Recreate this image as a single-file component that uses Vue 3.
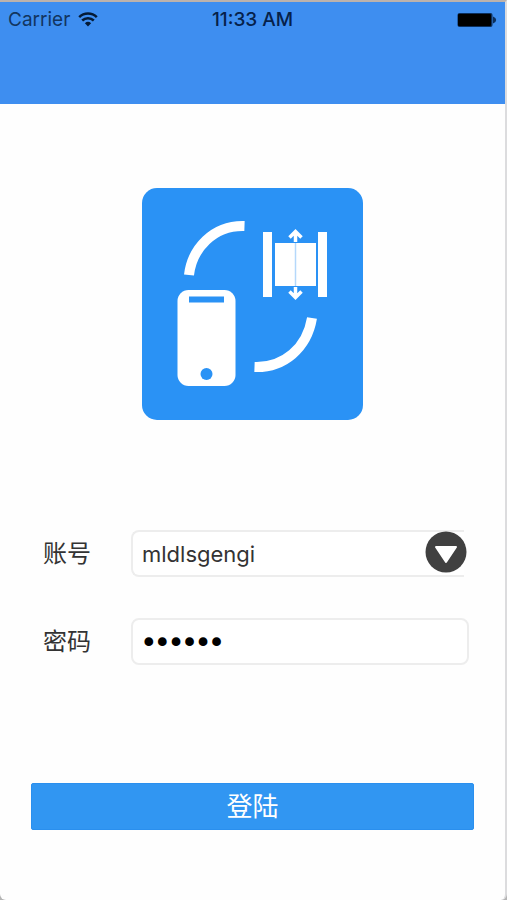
<template>
  <div class="screen">
    <header class="header">
      <div class="status-bar">
        <div class="carrier">
          <span>Carrier</span>
          <svg class="wifi" viewBox="0 0 20 15" aria-hidden="true">
            <path d="M1.200 5.200a12.600 12.600 0 0 1 17.600 0" />
            <path d="M4.200 8.500a8.300 8.300 0 0 1 11.600 0" />
            <path class="dot" d="M6.900 11.200a4.600 4.600 0 0 1 6.200 0L10 14.600z" />
          </svg>
        </div>
        <time class="clock">11:33 AM</time>
        <svg class="battery" viewBox="0 0 40 16" aria-hidden="true">
          <rect x="0.500" y="1" width="35" height="14" rx="2" />
          <rect class="level" x="1" y="2" width="33" height="12" rx="1" />
          <path d="M36 4.500q3.200 1.200 3.200 3.500t-3.200 3.500z" />
        </svg>
      </div>
    </header>

    <main class="content">
      <svg class="logo" viewBox="0 0 221 232" role="img" aria-label="Logo">
        <rect width="221" height="232" rx="15" fill="#2a92f5" />
        <g fill="none" stroke="#fff" stroke-width="10">
          <path d="M47 87C50 61 71 37 102.500 38" />
          <path d="M170 130C165 160 142 180 112.500 179" />
        </g>
        <rect x="35.500" y="102" width="58" height="96" rx="11" fill="#fff" />
        <rect x="47" y="108.500" width="35" height="6" fill="#2a92f5" />
        <circle cx="64.500" cy="186" r="6" fill="#2a92f5" />
        <g fill="#fff">
          <rect x="121" y="44" width="9" height="65" />
          <rect x="176" y="44" width="9" height="65" />
          <rect x="133" y="55" width="41" height="43" />
        </g>
        <path d="M153.500 55v43" stroke="#b5d8fb" stroke-width="1.500" />
        <g fill="none" stroke="#fff" stroke-width="3.500">
          <path d="M153.500 54V44M147.500 49.500l6-6 6 6" />
          <path d="M153.500 99v10M147.500 103.500l6 6 6-6" />
        </g>
      </svg>

      <form class="login-form" @submit.prevent="login">
        <div class="fields">
          <div class="field">
            <label for="account">账号</label>
            <div class="account-box">
              <input
                id="account"
                v-model="account"
                type="text"
                autocomplete="username"
              />
              <button type="button" class="toggle" aria-label="选择账号">
                <svg viewBox="0 0 42 42" aria-hidden="true">
                  <circle cx="21" cy="21" r="20.500" fill="#404040" />
                  <path
                    d="M11 16h20L21 31z"
                    fill="#fff"
                    stroke="#fff"
                    stroke-width="2"
                    stroke-linejoin="round"
                  />
                </svg>
              </button>
            </div>
          </div>
          <div class="field">
            <label for="password">密码</label>
            <input
              id="password"
              v-model="password"
              class="password"
              type="password"
              autocomplete="current-password"
            />
          </div>
        </div>
        <button type="submit" class="submit">登陆</button>
      </form>
    </main>
  </div>
</template>

<script setup>
import { ref } from "vue";

const emit = defineEmits(["login"]);

const account = ref("mldlsgengi");
const password = ref("123456");

const login = () => {
  emit("login", { account: account.value, password: password.value });
};
</script>

<style>
body {
  margin: 0;
  background-color: #b4b4b4;
}
</style>

<style scoped>
.screen {
  box-sizing: border-box;
  min-height: 100vh;
  border-top: 2px solid #bcb2ac;
  border-right: 2px solid #dcdcde;
  border-radius: 0 0 6px 6px;
  background-color: #fefefe;
  font-family: Inter, "Noto Sans CJK SC", sans-serif;
  color: #333;
}

.header {
  height: 102px;
  background-color: #3e8ef0;
}

.status-bar {
  display: grid;
  grid-template-columns: 1fr auto 1fr;
  align-items: center;
  height: 35px;
  padding: 0 8px;
  font-size: 19px;
  line-height: 24px;
}

.carrier {
  display: flex;
  align-items: center;
  gap: 8px;
  color: #12355f;
}

.wifi {
  width: 20px;
  height: 15px;
  fill: none;
  stroke: #041a35;
  stroke-width: 2.5;
}

.wifi .dot {
  fill: #041a35;
  stroke: none;
}

.clock {
  color: #06214a;
  font-weight: 500;
}

.battery {
  justify-self: end;
  width: 40px;
  height: 16px;
  fill: #0c2f5c;
}

.battery .level {
  fill: #000;
}

.content {
  display: flex;
  flex-direction: column;
  align-items: center;
  padding: 84px 31px 68px;
}

.logo {
  width: 221px;
  height: 232px;
}

.login-form {
  width: 100%;
  margin-top: 110px;
}

.fields {
  display: flex;
  flex-direction: column;
  gap: 41px;
  padding: 0 5px 0 12px;
}

.field {
  display: flex;
  align-items: center;
}

.field label {
  flex: 0 0 88px;
  font-size: 24px;
  line-height: 32px;
}

input {
  box-sizing: border-box;
  flex: 1;
  min-width: 0;
  height: 47px;
  padding: 0 9px;
  border: 2px solid #ededed;
  border-radius: 8px;
  background-color: #fff;
  font-family: inherit;
  font-size: 22px;
  color: #333;
}

input:focus {
  outline: none;
  border-color: #3196f2;
}

.account-box {
  position: relative;
  display: flex;
  flex: 1;
  min-width: 0;
  padding-right: 5px;
}

.account-box input {
  padding-right: 44px;
  border-right: none;
  border-radius: 8px 0 0 8px;
}

.toggle {
  position: absolute;
  top: 1px;
  right: 2px;
  width: 42px;
  height: 42px;
  padding: 0;
  border: none;
  background: none;
  cursor: pointer;
}

.toggle svg {
  display: block;
}

.password {
  font-family: "DejaVu Sans", sans-serif;
  font-size: 23px;
  color: #000;
  -webkit-text-stroke: 2px #000;
}

.submit {
  display: block;
  width: 100%;
  height: 47px;
  margin-top: 118px;
  padding: 0;
  border: 1px solid #2a8fee;
  border-radius: 2px;
  background-color: #3196f2;
  font-family: inherit;
  font-size: 26px;
  line-height: 32px;
  color: #fff;
  cursor: pointer;
}
</style>
